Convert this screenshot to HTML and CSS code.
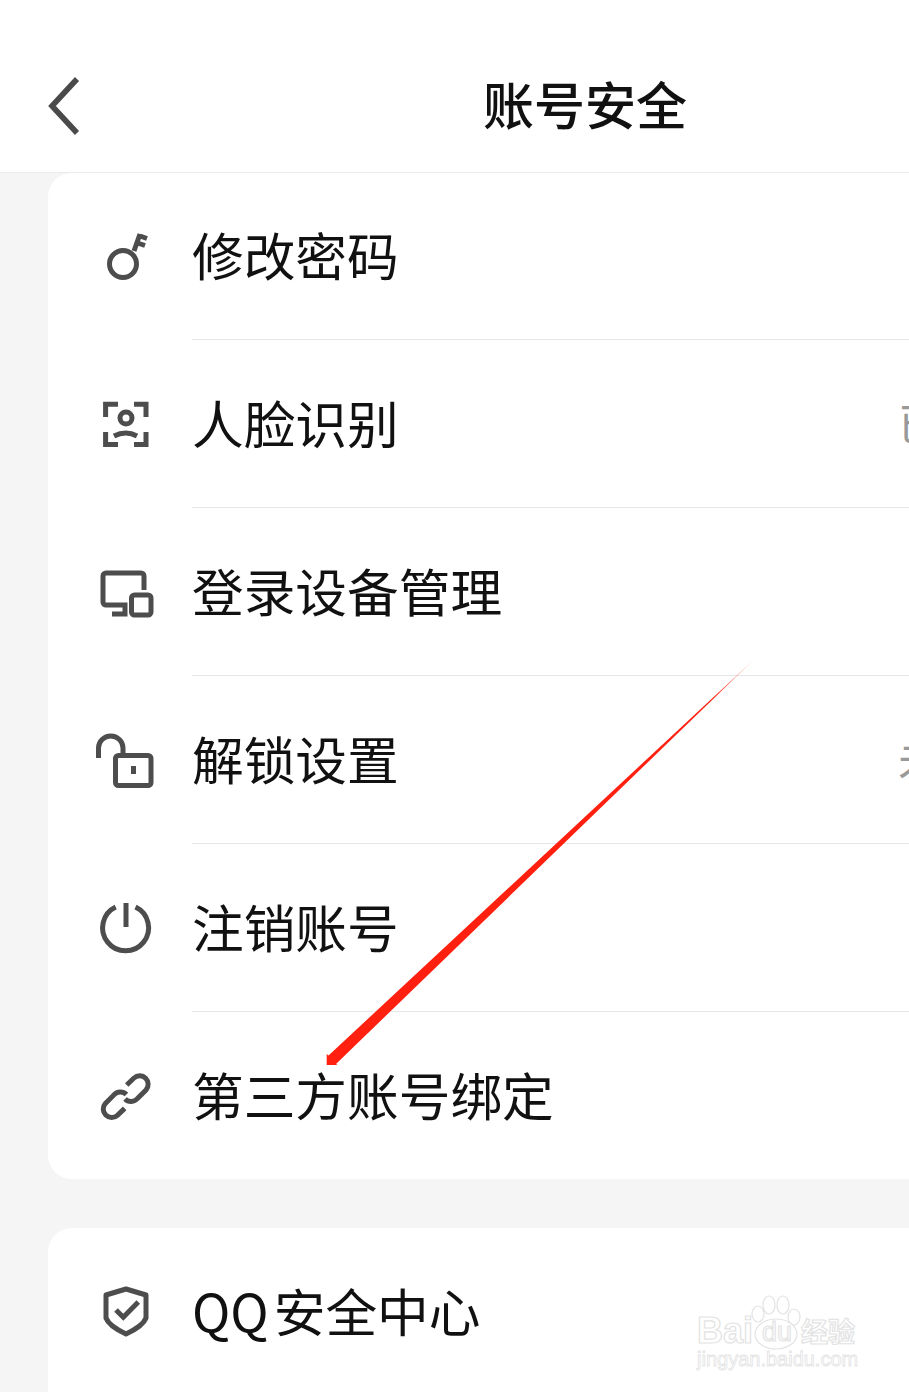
FILE: index.html
```html
<!DOCTYPE html>
<html lang="zh-CN">
<head>
    <meta charset="UTF-8">
    <meta name="viewport" content="width=device-width, initial-scale=1.0">
    <title>账号安全</title>
    <link rel="stylesheet" href="styles.css">
</head>
<body>
    <header class="topbar">
        <svg class="back-icon" viewBox="0 0 40 64"><path d="M33 8 L8 35 L33 62"/></svg>
        <div class="topbar-title">账号安全</div>
    </header>

    <section class="card">
        <div class="row">
            <svg class="row-icon" viewBox="0 0 76 76"><circle cx="35" cy="45" r="13.5"/><path d="M46 32 L52 15 M52 17 L59 19.5 M49.5 24 L57 26.5"/></svg>
            <div class="row-body"><span class="row-label">修改密码</span></div>
        </div>
        <div class="row">
            <svg class="row-icon" viewBox="0 0 76 76"><path d="M17.6 31 V18.3 H30 M46 18.3 H58 V31 M17.6 46 V58.4 H30 M46 58.4 H58 V46"/><circle cx="38" cy="32" r="6"/><path d="M26 50 Q38 44 49 50"/></svg>
            <div class="row-body"><span class="row-label">人脸识别</span><span class="row-value">已开启</span></div>
        </div>
        <div class="row">
            <svg class="row-icon" viewBox="0 0 76 76"><path d="M56 36 V22 a3 3 0 0 0 -3 -3 H18 a3 3 0 0 0 -3 3 V48 a3 3 0 0 0 3 3 H37 V60 H24"/><rect x="43.5" y="41" width="19.5" height="20" rx="3"/></svg>
            <div class="row-body"><span class="row-label">登录设备管理</span></div>
        </div>
        <div class="row">
            <svg class="row-icon" viewBox="0 0 76 76"><path d="M10.5 36 V26 a12.2 12 0 0 1 24.5 0 V33"/><rect x="27.5" y="33.5" width="35.5" height="30" rx="3"/><rect class="solid" x="43" y="44" width="5" height="8"/></svg>
            <div class="row-body"><span class="row-label">解锁设置</span><span class="row-value">未设置</span></div>
        </div>
        <div class="row">
            <svg class="row-icon" viewBox="0 0 76 76"><path d="M27.7 17 A23 23 0 1 0 47.5 17 M38 13 V37"/></svg>
            <div class="row-body"><span class="row-label">注销账号</span></div>
        </div>
        <div class="row">
            <svg class="row-icon" viewBox="0 0 76 76"><path d="M38.7 27 L46 20 A8.5 8.5 0 0 1 58 32 L49.5 40.5 A8.5 8.5 0 0 1 37 41"/><path d="M36.7 50.4 L29.4 57.4 A8.5 8.5 0 0 1 17.4 45.4 L25.9 36.9 A8.5 8.5 0 0 1 38.4 36.4"/></svg>
            <div class="row-body"><span class="row-label">第三方账号绑定</span></div>
        </div>
    </section>

    <section class="card card-second">
        <div class="row">
            <svg class="row-icon" viewBox="0 0 76 76"><path class="join-round" d="M38 15 L58 21 V44 Q55 52 38 60 Q21 52 18 44 V21 Z"/><path d="M28 36 L35.3 43.3 L50.3 28"/></svg>
            <div class="row-body"><span class="row-label"><span class="latin">QQ</span>安全中心</span></div>
        </div>
    </section>

    <!-- red arrow and watermark lie over the page -->
    <svg class="overlay" viewBox="0 0 909 1392">
        <defs>
            <linearGradient id="arrow-fade" x1="756" y1="657" x2="327" y2="1065" gradientUnits="userSpaceOnUse">
                <stop offset="0" stop-color="#ff2010" stop-opacity="0.1"/>
                <stop offset="0.1" stop-color="#ff2010"/>
                <stop offset="1" stop-color="#ff2010"/>
            </linearGradient>
        </defs>
        <polygon fill="url(#arrow-fade)" points="756.6,657 336,1064 337.5,1065 326.7,1065 326.7,1054 328.5,1055.5"/>
        <g class="mark">
            <ellipse cx="758" cy="1314" rx="6" ry="8"/>
            <ellipse cx="769" cy="1305" rx="6" ry="9"/>
            <ellipse cx="783" cy="1305" rx="6" ry="9"/>
            <ellipse cx="794" cy="1317" rx="6" ry="8"/>
            <ellipse cx="776" cy="1334" rx="21" ry="15"/>
            <text class="mark-big" x="697" y="1343">Bai</text>
            <text class="mark-du" x="762" y="1341">du</text>
            <text class="mark-cn" x="801" y="1342">经验</text>
            <text class="mark-url" x="697" y="1366">jingyan.baidu.com</text>
        </g>
    </svg>
</body>
</html>
```

FILE: styles.css
```css
body {
    font-family: "Noto Sans CJK SC", "Noto Sans", sans-serif;
    margin: 0;
    padding: 0;
    width: 909px;
    height: 1392px;
    overflow: hidden;
    position: relative;
    background-color: #f5f5f5;
    color: #111;
}
.topbar {
    display: flex;
    align-items: center;
    box-sizing: border-box;
    height: 173px;
    padding: 34px 0 0 44px;
    background: #fff;
    border-bottom: 1px solid #ececec;
}
.back-icon {
    width: 40px;
    height: 64px;
    flex: none;
    fill: none;
    stroke: #4a4a4a;
    stroke-width: 5.6;
}
.topbar-title {
    margin-left: 399px;
    font-size: 51px;
    font-weight: 500;
    line-height: 64px;
}
.card {
    margin-left: 48px;
    background: #fff;
    border-radius: 24px 0 0 24px;
}
.card-second {
    margin-top: 49px;
    height: 200px;
}
.row {
    display: flex;
    height: 168px;
}
.card > .row:first-child {
    height: 167px;
}
.card > .row:last-child {
    height: 167px;
}
.row-icon {
    width: 76px;
    height: 76px;
    flex: none;
    align-self: center;
    margin: 0 28px 0 40px;
    fill: none;
    stroke: #4d4d4d;
    stroke-width: 5;
}
.row-icon .solid {
    fill: #4d4d4d;
    stroke: none;
}
.row-icon .join-round {
    stroke-linejoin: round;
}
.row-body {
    flex: 1;
    min-width: 0;
    display: flex;
    align-items: center;
    box-sizing: border-box;
    padding-bottom: 4px;
    border-bottom: 1px solid #e6e6e6;
}
.row:last-child .row-body {
    border-bottom: none;
}
.row-label {
    flex: 1;
    font-size: 51.7px;
    line-height: 64px;
    white-space: nowrap;
}
.latin {
    margin-right: 5px;
}
.row-value {
    flex: none;
    margin-right: -121px;
    font-size: 44px;
    color: #999;
    white-space: nowrap;
}
.overlay {
    position: absolute;
    left: 0;
    top: 0;
    width: 909px;
    height: 1392px;
    pointer-events: none;
}
.mark ellipse, .mark text {
    fill: #fff;
    stroke: #e3e3e3;
    stroke-width: 1.2;
}
.mark text {
    font-family: "Liberation Sans", sans-serif;
}
.mark .mark-big {
    font-size: 36px;
    font-weight: bold;
}
.mark .mark-du {
    font-size: 27px;
}
.mark .mark-cn {
    font-family: "Noto Sans CJK SC", sans-serif;
    font-size: 27px;
    font-weight: bold;
}
.mark .mark-url {
    font-size: 20px;
    stroke-width: 0.8;
}
```
